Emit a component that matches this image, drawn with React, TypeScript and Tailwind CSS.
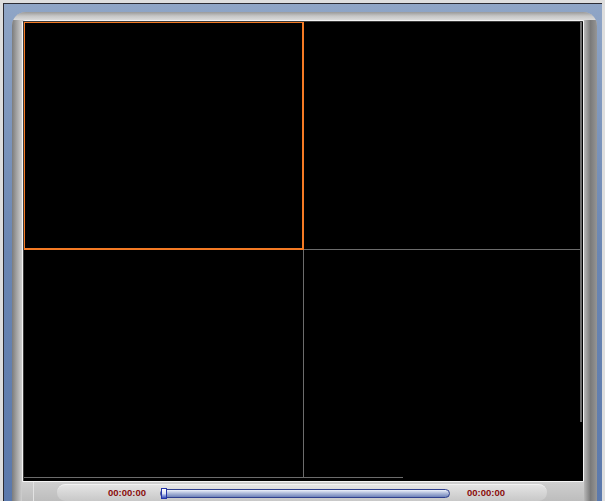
import React from "react";

function Time() {
  return (
    <span className="text-[9.5px] font-bold leading-none text-[#8a0c0c] font-['Liberation_Sans',Arial,sans-serif]">
      00:00:00
    </span>
  );
}

export default function App() {
  return (
    <div className="w-[605px] h-[501px] overflow-hidden bg-[#dedede] pt-[3px] px-[3px]">
      <div className="h-full border-l border-t border-[#2c2c34] bg-gradient-to-b from-[#8fa5c6] via-[#6a86b3] to-[#5b79ac] pl-[8px] pt-[8px] pr-[5px]">
        <div className="h-full rounded-t-[14px] overflow-hidden flex flex-col bg-[#c2c2c2]">
          <div className="h-[8px] shrink-0 bg-gradient-to-b from-[#9a9a9a] via-[#c6c6c6] to-[#dadada]" />
          <div className="flex flex-1">
            <div className="w-[10px] shrink-0 bg-gradient-to-r from-[#7c7c7c] via-[#a6a6a6] to-[#cfcfcf]" />
            <div className="flex flex-col w-[562px]">
              <div className="border border-[#f4f4f4] rounded-tl-[3px]">
                <div className="border-l border-t border-[#3c3c3c] bg-black pr-[1px] pb-[3px] flex flex-col">
                  <div className="flex h-[228px]">
                    <div className="w-[280px] h-[228px] border-l border-t border-r-2 border-b-2 border-[#f47a24]" />
                    <div className="w-[278px] h-[228px] border-b border-r-2 border-[#6c6c6c]" />
                  </div>
                  <div className="flex h-[228px]">
                    <div className="w-[280px] h-[228px] border-r border-b border-[#6c6c6c]" />
                    <div className="w-[278px] h-[228px] flex flex-col">
                      <div className="flex flex-1">
                        <div className="flex-1" />
                        <div className="w-[2px] h-[172px] bg-[#6c6c6c]" />
                      </div>
                      <div className="h-[1px] w-[99px] bg-[#6c6c6c]" />
                    </div>
                  </div>
                </div>
              </div>
              <div className="flex h-[19px] bg-gradient-to-b from-[#cfcfcf] to-[#bdbdbd]">
                <div className="w-[11px] shrink-0" />
                <div className="w-[1px] shrink-0 bg-[#e2e2e2]" />
                <div className="w-[23px] shrink-0" />
                <div className="flex items-center mt-[2px] w-[490px] rounded-l-[10px] rounded-r-[10px] bg-gradient-to-b from-[#e4e4e4] via-[#d6d6d6] to-[#c8c8c8] border-t border-[#f2f2f2]">
                  <div className="w-[51px] shrink-0" />
                  <Time />
                  <div className="w-[14px] shrink-0" />
                  <div className="relative w-[290px] h-[9px] shrink-0 rounded-full border border-[#2f3f8e] bg-gradient-to-b from-[#eef2fb] via-[#a9b6d8] to-[#6f82b8]">
                    <div className="absolute left-[0px] top-[-2px] w-[6px] h-[11px] border border-[#2434a8] bg-gradient-to-b from-[#ffffff] via-[#dfe4f4] to-[#3a4bb8]" />
                  </div>
                  <div className="w-[17px] shrink-0" />
                  <Time />
                </div>
              </div>
            </div>
            <div className="w-[13px] shrink-0 bg-gradient-to-r from-[#b8b8b8] via-[#7a7a7a] to-[#969696]" />
          </div>
        </div>
      </div>
    </div>
  );
}
